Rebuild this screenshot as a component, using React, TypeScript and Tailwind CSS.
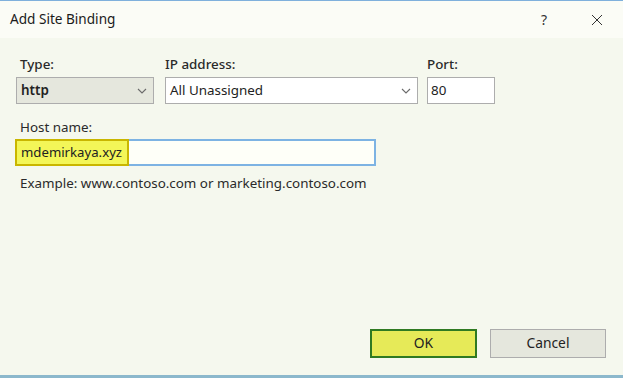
import React from "react";

function Chevron() {
  return (
    <svg width="10" height="6" viewBox="0 0 10 6" fill="none">
      <path d="M1 1 L5 5 L9 1" stroke="#6b6b6b" strokeWidth="1.1" />
    </svg>
  );
}

export default function App() {
  return (
    <div
      className="w-[623px] h-[378px] flex flex-col overflow-hidden text-[#1f1f1f]"
      style={{ fontFamily: '"Noto Sans", "Open Sans", Arial, sans-serif' }}
    >
      <div className="h-[1px] bg-[#7fb0dc]" />
      <div className="h-[37px] bg-[#fbfcf6] flex items-center pl-[10px] pr-[20px]">
        <span className="text-[13.6px] text-[#1a1a1a]">Add Site Binding</span>
        <div className="ml-auto flex items-center">
          <span className="text-[14px] text-[#333] mr-[44px]">?</span>
          <svg width="12" height="12" viewBox="0 0 12 12">
            <path d="M1 1 L11 11 M11 1 L1 11" stroke="#333" strokeWidth="1" />
          </svg>
        </div>
      </div>
      <div className="flex-1 bg-[#f5f8ee] flex flex-col pl-[16px] pt-[17px]">
        <div className="flex">
          <div className="flex flex-col w-[138px]">
            <span className="ml-[4px] h-[18px] leading-[18px] text-[13.4px] font-medium text-[#2a2a2a]">Type:</span>
            <div className="mt-[4px] h-[27px] bg-[#e5e7dd] border border-[#adadad] flex items-center pl-[4px] pr-[6px]">
              <span className="text-[13.4px] font-semibold text-[#222]">http</span>
              <span className="ml-auto">
                <Chevron />
              </span>
            </div>
          </div>
          <div className="flex flex-col w-[253px] ml-[11px]">
            <span className="h-[18px] leading-[18px] text-[13.4px] font-medium text-[#2a2a2a]">IP address:</span>
            <div className="mt-[4px] h-[27px] bg-white border border-[#adadad] flex items-center pl-[4px] pr-[6px]">
              <span className="text-[13.4px] text-[#222]">All Unassigned</span>
              <span className="ml-auto">
                <Chevron />
              </span>
            </div>
          </div>
          <div className="flex flex-col w-[68px] ml-[9px]">
            <span className="h-[18px] leading-[18px] text-[13.4px] font-medium text-[#2a2a2a]">Port:</span>
            <div className="mt-[4px] h-[27px] bg-white border border-[#adadad] flex items-center pl-[3px]">
              <span className="text-[13.4px] text-[#222]">80</span>
            </div>
          </div>
        </div>
        <span className="mt-[14px] ml-[4px] h-[18px] leading-[18px] text-[13.4px] text-[#2a2a2a]">Host name:</span>
        <div className="-ml-[1px] mt-[3px] w-[361px] h-[27px] bg-[#fefff8] border-2 border-[#7db3e3] flex items-stretch">
          <div className="-m-[2px] w-[114px] bg-[#f3f658] border-2 border-[#c9b600] flex items-center pl-[4px]">
            <span className="text-[13.2px] text-[#222]">mdemirkaya.xyz</span>
          </div>
        </div>
        <span className="mt-[8px] ml-[4px] h-[18px] leading-[18px] text-[13.4px] text-[#2a2a2a]">
          Example: www.contoso.com or marketing.contoso.com
        </span>
        <div className="flex-1" />
        <div className="flex justify-end pr-[17px] pb-[17px] gap-[13px]">
          <div className="w-[107px] h-[29px] bg-[#e6ea58] border-2 border-[#2f7a22] flex items-center justify-center">
            <span className="text-[13.8px] text-[#222]">OK</span>
          </div>
          <div className="w-[116px] h-[29px] bg-[#e5e7dd] border border-[#adadad] flex items-center justify-center">
            <span className="text-[13.8px] text-[#222]">Cancel</span>
          </div>
        </div>
      </div>
      <div className="h-[3px] bg-[#8cb8cc]" />
    </div>
  );
}
